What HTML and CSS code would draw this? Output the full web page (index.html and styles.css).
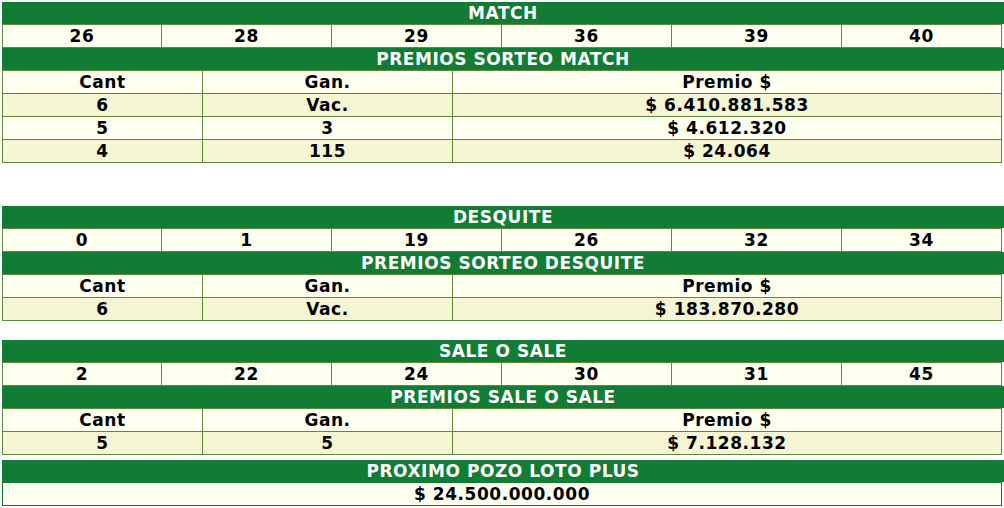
FILE: index.html
```html
<!DOCTYPE html>
<html lang="es">
<head>
<meta charset="utf-8">
<title>Resultados</title>
<link rel="stylesheet" href="styles.css">
</head>
<body>
<div class="page">
  <section class="block first">
    <div class="head">MATCH</div>
    <table class="nums">
      <tr><td>26</td><td>28</td><td>29</td><td>36</td><td>39</td><td>40</td></tr>
    </table>
    <div class="head">PREMIOS SORTEO MATCH</div>
    <table class="prizes">
      <tr><td>Cant</td><td>Gan.</td><td>Premio $</td></tr>
      <tr class="alt"><td>6</td><td>Vac.</td><td>$ 6.410.881.583</td></tr>
      <tr><td>5</td><td>3</td><td>$ 4.612.320</td></tr>
      <tr class="alt"><td>4</td><td>115</td><td>$ 24.064</td></tr>
    </table>
  </section>

  <section class="block second">
    <div class="head">DESQUITE</div>
    <table class="nums">
      <tr><td>0</td><td>1</td><td>19</td><td>26</td><td>32</td><td>34</td></tr>
    </table>
    <div class="head">PREMIOS SORTEO DESQUITE</div>
    <table class="prizes">
      <tr><td>Cant</td><td>Gan.</td><td>Premio $</td></tr>
      <tr class="alt"><td>6</td><td>Vac.</td><td>$ 183.870.280</td></tr>
    </table>
  </section>

  <section class="block third">
    <div class="head">SALE O SALE</div>
    <table class="nums">
      <tr><td>2</td><td>22</td><td>24</td><td>30</td><td>31</td><td>45</td></tr>
    </table>
    <div class="head">PREMIOS SALE O SALE</div>
    <table class="prizes">
      <tr><td>Cant</td><td>Gan.</td><td>Premio $</td></tr>
      <tr class="alt"><td>5</td><td>5</td><td>$ 7.128.132</td></tr>
    </table>
  </section>

  <section class="block fourth">
    <div class="head">PROXIMO POZO LOTO PLUS</div>
    <table class="pozo">
      <tr><td>$ 24.500.000.000</td></tr>
    </table>
  </section>
</div>
</body>
</html>
```

FILE: styles.css
```css
html, body {
  margin: 0;
  padding: 0;
  background: #ffffff;
}

.page {
  padding: 2px 0 0 2px;
  font-family: "DejaVu Sans", Verdana, sans-serif;
  font-weight: bold;
  font-size: 17px;
  letter-spacing: 0.55px;
  color: #000000;
}

.block {
  width: 1002px;
}

.second { margin-top: 43px; }
.third { margin-top: 19px; }
.fourth { margin-top: 5px; }

.head {
  height: 22px;
  line-height: 22px;
  background: #107c34;
  color: #ffffff;
  text-align: center;
  white-space: nowrap;
}

table {
  width: 1000px;
  border-collapse: collapse;
  table-layout: fixed;
}

td {
  border: 1px solid #5d8b3b;
  background: #fffff0;
  height: 22px;
  line-height: 22px;
  padding: 0;
  text-align: center;
  white-space: nowrap;
}

tr.alt td {
  background: #f5f5d3;
}

.nums td { width: 169px; }
.nums td:first-child { width: 158px; }
.nums td:last-child { width: 159px; }

.prizes td:nth-child(1) { width: 199px; }
.prizes td:nth-child(2) { width: 249px; }
.prizes td:nth-child(3) { width: 548px; }

.pozo td {
  border-color: #107c34;
}
```
